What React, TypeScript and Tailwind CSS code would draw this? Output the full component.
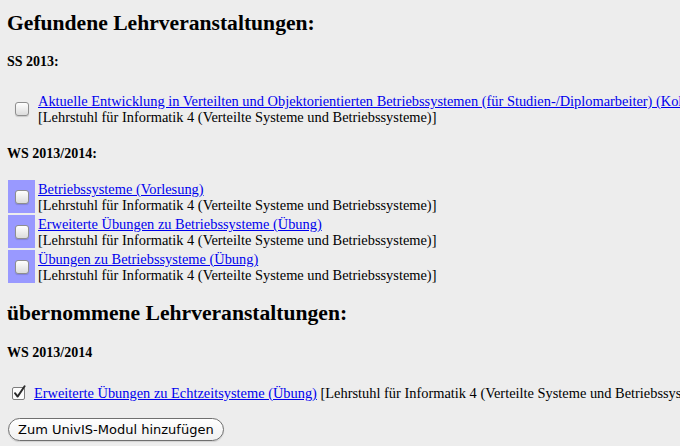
import React from 'react'

const CHAIR = '[Lehrstuhl für Informatik 4 (Verteilte Systeme und Betriebssysteme)]'

function Box({ checked = false }: { checked?: boolean }) {
  if (checked) {
    return (
      <svg width="16" height="16" viewBox="0 0 16 16" className="block shrink-0">
        <rect x="1.5" y="2.5" width="12" height="12" rx="1.5" fill="#fdfdfd" stroke="#7d7d7d" />
        <path d="M4 8.2 L6.6 11.6 L13.6 1.2" fill="none" stroke="#2b2b2b" strokeWidth="1.9" strokeLinecap="round" strokeLinejoin="round" />
      </svg>
    )
  }
  return (
    <span className="block w-[14px] h-[14px] shrink-0 rounded-[3px] border border-[#8e8e8e] bg-gradient-to-b from-[#ffffff] to-[#dcdcdc] shadow-[0_1px_1px_rgba(0,0,0,0.15)]" />
  )
}

function CourseRow({ title, marked }: { title: string; marked?: boolean }) {
  return (
    <div className="flex gap-[2px]">
      <div className={`w-[27px] h-[33px] shrink-0 flex items-center justify-center ${marked ? 'bg-[#9999ff]' : ''}`}>
        <Box />
      </div>
      <div className="pt-[1px] pl-[1px] leading-[16px] whitespace-nowrap">
        <a href="#" className="text-[#0000ee] underline">{title}</a>
        <br />
        <span>{CHAIR}</span>
      </div>
    </div>
  )
}

export default function App() {
  const ws = ['Betriebssysteme (Vorlesung)', 'Erweiterte Übungen zu Betriebssysteme (Übung)', 'Übungen zu Betriebssysteme (Übung)']

  return (
    <div className="w-[680px] h-[446px] overflow-hidden bg-[#ededed] text-black text-[14.4px] pl-[7px]" style={{ fontFamily: '"Liberation Serif", "Times New Roman", serif' }}>
      <h2 className="pt-[11px] text-[21.6px] leading-[25px] font-bold">Gefundene Lehrveranstaltungen:</h2>

      <h4 className="mt-[18px] text-[14px] leading-[16px] font-bold">SS 2013:</h4>

      <div className="mt-[22px] pl-[1px] flex flex-col">
        <CourseRow title="Aktuelle Entwicklung in Verteilten und Objektorientierten Betriebssystemen (für Studien-/Diplomarbeiter) (Kolloquium)" />
      </div>

      <h4 className="mt-[21px] text-[14px] leading-[16px] font-bold">WS 2013/2014:</h4>

      <div className="mt-[18px] pl-[1px] flex flex-col gap-[2px]">
        {ws.map(t => <CourseRow key={t} title={t} marked />)}
      </div>

      <h2 className="mt-[18px] text-[21.6px] leading-[25px] font-bold">übernommene Lehrveranstaltungen:</h2>

      <h4 className="mt-[19px] text-[14px] leading-[16px] font-bold">WS 2013/2014</h4>

      <div className="mt-[24px] flex items-center gap-[7px] pl-[4px] whitespace-nowrap leading-[16px]">
        <Box checked />
        <span>
          <a href="#" className="text-[#0000ee] underline">Erweiterte Übungen zu Echtzeitsysteme (Übung)</a> {CHAIR}
        </span>
      </div>

      <button
        className="mt-[17px] ml-[1px] h-[23px] px-[9px] rounded-full border border-[#6f6f6f] bg-gradient-to-b from-[#ffffff] to-[#f0f0f0] text-[13px] leading-[20px] text-black shadow-[0_1px_1px_rgba(0,0,0,0.12)]"
        style={{ fontFamily: '"DejaVu Sans", "Liberation Sans", sans-serif' }}
      >
        Zum UnivIS-Modul hinzufügen
      </button>
    </div>
  )
}
